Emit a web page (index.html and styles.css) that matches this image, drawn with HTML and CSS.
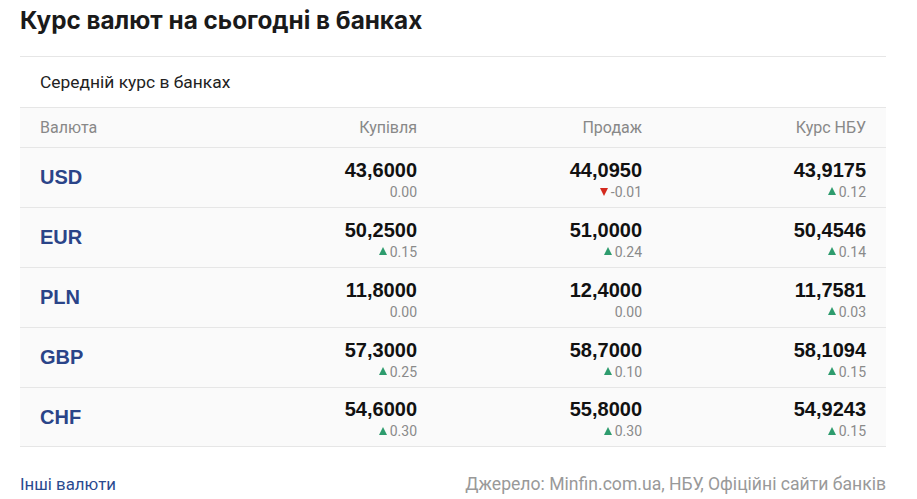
FILE: index.html
```html
<!DOCTYPE html>
<html lang="uk">
<head>
<meta charset="utf-8">
<link rel="stylesheet" href="styles.css">
</head>
<body>
<div class="page">
  <h1 class="title">Курс валют на сьогодні в банках</h1>
  <div class="card">
    <div class="subtitle">Середній курс в банках</div>
    <div class="row head">
      <div class="c-cur">Валюта</div>
      <div class="c-num">Купівля</div>
      <div class="c-num">Продаж</div>
      <div class="c-num">Курс НБУ</div>
    </div>
    <div class="row">
      <div class="c-cur code">USD</div>
      <div class="c-num"><div class="val">43,6000</div><div class="chg">0.00</div></div>
      <div class="c-num"><div class="val">44,0950</div><div class="chg"><span class="tri down"></span>-0.01</div></div>
      <div class="c-num"><div class="val">43,9175</div><div class="chg"><span class="tri up"></span>0.12</div></div>
    </div>
    <div class="row">
      <div class="c-cur code">EUR</div>
      <div class="c-num"><div class="val">50,2500</div><div class="chg"><span class="tri up"></span>0.15</div></div>
      <div class="c-num"><div class="val">51,0000</div><div class="chg"><span class="tri up"></span>0.24</div></div>
      <div class="c-num"><div class="val">50,4546</div><div class="chg"><span class="tri up"></span>0.14</div></div>
    </div>
    <div class="row">
      <div class="c-cur code">PLN</div>
      <div class="c-num"><div class="val">11,8000</div><div class="chg">0.00</div></div>
      <div class="c-num"><div class="val">12,4000</div><div class="chg">0.00</div></div>
      <div class="c-num"><div class="val">11,7581</div><div class="chg"><span class="tri up"></span>0.03</div></div>
    </div>
    <div class="row">
      <div class="c-cur code">GBP</div>
      <div class="c-num"><div class="val">57,3000</div><div class="chg"><span class="tri up"></span>0.25</div></div>
      <div class="c-num"><div class="val">58,7000</div><div class="chg"><span class="tri up"></span>0.10</div></div>
      <div class="c-num"><div class="val">58,1094</div><div class="chg"><span class="tri up"></span>0.15</div></div>
    </div>
    <div class="row">
      <div class="c-cur code">CHF</div>
      <div class="c-num"><div class="val">54,6000</div><div class="chg"><span class="tri up"></span>0.30</div></div>
      <div class="c-num"><div class="val">55,8000</div><div class="chg"><span class="tri up"></span>0.30</div></div>
      <div class="c-num"><div class="val">54,9243</div><div class="chg"><span class="tri up"></span>0.15</div></div>
    </div>
  </div>
  <div class="footer">
    <a class="more" href="#">Інші валюти</a>
    <span class="source">Джерело: Minfin.com.ua, НБУ, Офіційні сайти банків</span>
  </div>
</div>
</body>
</html>
```
FILE: styles.css
```css
* { box-sizing: border-box; }
html, body { margin: 0; padding: 0; background: #fff; }
body { font-family: Roboto, "Liberation Sans", Arial, sans-serif; color: #222; }
.page { width: 917px; padding: 4px 31px 0 20px; }
.title {
  margin: 0;
  font-family: Inter, "Liberation Sans", sans-serif;
  font-weight: 700;
  font-size: 24.3px;
  line-height: 32px;
  color: #1a1a1a;
}
.card {
  margin-top: 20px;
  border-top: 1px solid #e6e6e6;
}
.subtitle {
  height: 50px;
  padding: 0 20px;
  display: flex;
  align-items: center;
  font-size: 17.4px;
  color: #222;
  background: #fff;
}
.row {
  display: grid;
  grid-template-columns: 1fr 225px 225px 224px;
  align-items: center;
  height: 60px;
  padding: 0 20px;
  background: #fafafa;
  border-top: 1px solid #e6e6e6;
}
.row:last-child { border-bottom: 1px solid #e6e6e6; }
.row.head {
  height: 40px;
  font-size: 16px;
  color: #888;
}
.c-num { text-align: right; }
.code {
  font-family: "Liberation Sans", Arial, sans-serif;
  font-weight: 700;
  font-size: 20px;
  color: #2a4488;
}
.val {
  font-family: "Liberation Sans", Arial, sans-serif;
  font-weight: 700;
  font-size: 20px;
  line-height: 22px;
  color: #111;
  padding-top: 2px;
}
.chg {
  font-size: 14px;
  line-height: 18px;
  margin-top: 2px;
  margin-bottom: -2px;
  color: #8a8a8a;
  display: flex;
  justify-content: flex-end;
  align-items: center;
  gap: 3px;
}
.tri {
  display: inline-block;
  width: 0;
  height: 0;
  border-left: 4.5px solid transparent;
  border-right: 4.5px solid transparent;
}
.tri.up { border-bottom: 8px solid #2e9c6e; margin-top: -1px; }
.tri.down { border-top: 8px solid #d42a1e; margin-top: 1px; }
.footer {
  display: flex;
  justify-content: space-between;
  align-items: baseline;
  margin-top: 27px;
  font-size: 17.6px;
}
.more { color: #2a4a90; text-decoration: none; font-size: 16.8px; }
.source { color: #999; }
```
